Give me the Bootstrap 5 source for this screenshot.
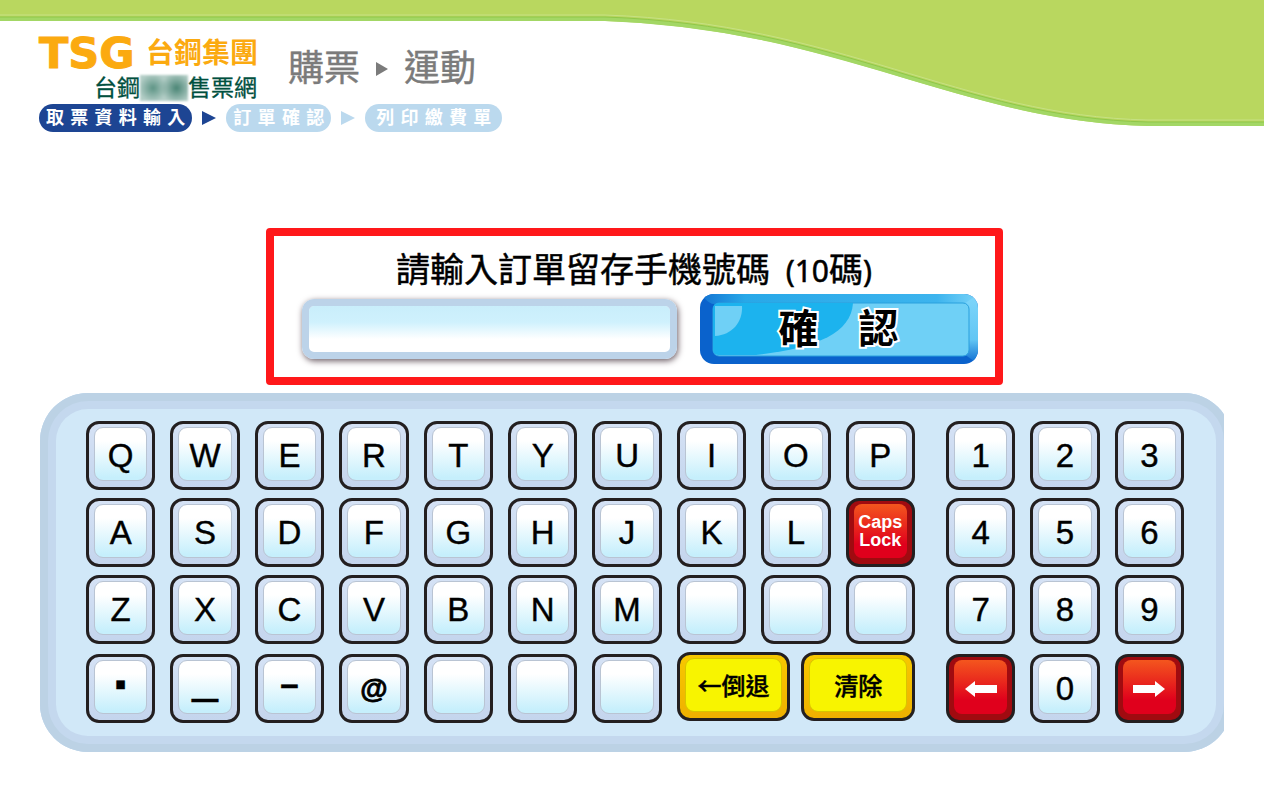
<!DOCTYPE html>
<html lang="zh-Hant">
<head>
<meta charset="utf-8">
<meta name="viewport" content="width=device-width, initial-scale=1">
<title>台鋼售票網</title>
<link rel="stylesheet" href="https://cdn.jsdelivr.net/npm/bootstrap@5.3.0/dist/css/bootstrap.min.css">
<style>
  body { font-family: "Liberation Sans", "Noto Sans CJK TC", sans-serif; background: #fff; color: #000; }
  .wave { height: 128px; z-index: -1; }
  .site-header { padding: 34px 39px 0; }
  .brand { color: #fbaa10; width: 219px; line-height: 40px; text-decoration: none; }
  .brand-mark { font: 700 43px/38px "DejaVu Sans", sans-serif; -webkit-text-stroke: 1px; }
  .brand-group { font-size: 28px; font-weight: 700; line-height: 40px; }
  .brand-site { color: #00503f; font-size: 23px; line-height: 28px; padding-right: 1px; -webkit-text-stroke: 0.3px; }
  .smudge { width: 48px; height: 26px; background: radial-gradient(circle at 27% 50%, #5d9485 0, transparent 38%), radial-gradient(circle at 76% 50%, #4a8575 0, transparent 40%), #b4cec7; filter: blur(1px); }
  .crumb { color: #7b7b7b; font-size: 36px; line-height: 54px; gap: 16px; padding-left: 30px; -webkit-text-stroke: 0.4px; }
  .steps { gap: 10px; color: #bbd9ee; padding-top: 2px; }
  .step-pill { background: #bbd9ee; color: #fff; font: 700 18px/28px "DejaVu Sans", "Noto Sans CJK TC", sans-serif; border-radius: 14px; padding: 0 7px; white-space: nowrap; height: 28px; }
  .step-pill.wide { padding: 0 11px; }
  .step-pill.current { background: #1d4593; }
  .entry { max-width: 737px; border: 8px solid #ff181a; border-radius: 4px; padding: 11px 17px 13px 28px; margin: 96px auto 8px; }
  .entry-label { font-size: 34px; line-height: 46px; padding-right: 11px; white-space: pre; -webkit-text-stroke: 0.5px; }
  .entry-label span { font-family: "Noto Sans", sans-serif; font-size: 30px; }
  .entry-row { gap: 23px; }
  .phone-box { height: 60px; border: 7px solid #bcd3e9; border-radius: 12px; background: linear-gradient(#c9eefb 0, #cff1fd 35%, #fff 72%) padding-box; box-shadow: 1px 2px 6px #6b5c64; font-size: 30px; }
  .phone-box:focus { border-color: #bcd3e9; background: linear-gradient(#c9eefb 0, #cff1fd 35%, #fff 72%) padding-box; }
  .confirm { width: 278px; height: 70px; border: 0; padding: 0; border-radius: 14px; overflow: hidden; background: #0a62cc; }
  .confirm-text { font-size: 40px; font-weight: 700; line-height: 70px; color: #000; -webkit-text-stroke: 4px #fff; paint-order: stroke fill; }
  .board-clip { margin: 0 40px; }
  .board { margin-right: -8px; border-radius: 48px; padding: 28px 48px 29px 46px; background: #d1e8f8; box-shadow: inset 0 0 0 8px #bcd2e5, inset 0 0 0 16px #c4d8ee; }
  .board-cols { display: grid; grid-template-columns: 829fr 238fr; gap: 31px; }
  .keys { display: grid; gap: 8px 15px; align-content: start; }
  .keys-abc { grid-template-columns: repeat(10, minmax(0, 1fr)); }
  .keys-num { grid-template-columns: repeat(3, minmax(0, 1fr)); }
  .keycap { height: 69px; width: 100%; border: 3px solid #231f20; border-radius: 13px; padding: 3px 5px 6px; background: linear-gradient(#d5e2f5, #c4d5ed); color: #000; }
  .face { display: flex; align-items: center; justify-content: center; height: 100%; border-radius: 9px; border: 1px solid #b9c4d3; background: linear-gradient(#fff 25%, #c6effc 95%); font-size: 33px; line-height: 36px; -webkit-text-stroke: 0.4px; padding-top: 3px; }
  .low { margin-top: 2px; }
  .big-line { font-size: 46px; padding-bottom: 24px; }
  .raised { padding-bottom: 10px; }
  .strong-at { font-size: 28px; font-weight: 700; -webkit-text-stroke: 0.8px; }
  .red { background: #a00b10; color: #fff; }
  .red .face { border: 0; background: linear-gradient(#f4561e, #e0001c 75%); border-radius: 8px; }
  .red .caps { font-size: 18px; font-weight: 700; line-height: 18px; padding-top: 0; -webkit-text-stroke: 0; }
  .yellow-pair { grid-column: span 3; display: flex; gap: 11px; }
  .yellow { background: linear-gradient(#f7c800, #efb000); }
  .yellow .face { background: #f8f400; border-color: #d9c400; font-family: "Noto Sans CJK TC", sans-serif; font-size: 24px; font-weight: 500; white-space: nowrap; padding-top: 0; }
</style>
</head>
<body>
<svg class="wave position-absolute top-0 start-0 w-100" viewBox="0 0 1264 128" preserveAspectRatio="none" aria-hidden="true">
  <path fill="#b9d75f" d="M0 0H1264V126H1148C960 122 840 29 605 21H0Z"/>
  <path fill="none" stroke="#c6e184" stroke-width="1" d="M0 15H605C840 23 960 116 1148 120H1264"/>
  <path fill="none" stroke="#a3d765" stroke-width="4" d="M0 19H605C840 27 960 120 1148 124H1264"/>
  <path fill="none" stroke="#8fc74a" stroke-width="1" d="M0 17H605C840 25 960 118 1148 122H1264"/>
</svg>

<header class="site-header">
  <div class="d-flex align-items-start">
    <a class="brand d-block" href="#">
      <span class="d-flex justify-content-between"><span class="brand-mark">TSG</span><span class="brand-group">台鋼集團</span></span>
      <span class="brand-site d-flex justify-content-end align-items-center"><span>台鋼</span><span class="smudge"></span><span>售票網</span></span>
    </a>
    <div class="crumb d-flex align-items-center pt-2">
      <span>購票</span>
      <svg width="12" height="14" viewBox="0 0 12 14" aria-hidden="true"><path fill="#7b7b7b" d="M0 0 12 7 0 14Z"/></svg>
      <span>運動</span>
    </div>
  </div>
  <div class="steps d-flex align-items-center">
    <span class="step-pill current">取 票 資 料 輸 入</span>
    <svg width="14" height="14" viewBox="0 0 14 14" aria-hidden="true"><path fill="#1d4593" d="M0 0 14 7 0 14Z"/></svg>
    <span class="step-pill">訂 單 確 認</span>
    <svg width="14" height="14" viewBox="0 0 14 14" aria-hidden="true"><path fill="#bbd9ee" d="M0 0 14 7 0 14Z"/></svg>
    <span class="step-pill wide">列 印 繳 費 單</span>
  </div>
</header>

<main>
  <div class="ps-1">
  <form class="entry" onsubmit="return false">
    <label class="entry-label d-block text-center" for="phone">請輸入訂單留存手機號碼<span>  (10</span>碼<span>)</span></label>
    <div class="entry-row d-flex align-items-center">
      <input class="form-control phone-box flex-fill" id="phone" type="text" maxlength="10">
      <button class="confirm position-relative flex-shrink-0" type="submit">
        <svg class="position-absolute top-0 start-0 w-100 h-100" viewBox="0 0 278 70" preserveAspectRatio="none" aria-hidden="true">
          <defs>
            <linearGradient id="rim" x1="0" x2="1" y1="0" y2="0"><stop offset="0" stop-color="#1577d4"/><stop offset=".15" stop-color="#28a8e8"/><stop offset=".85" stop-color="#3db4ee"/><stop offset="1" stop-color="#79d3f8"/></linearGradient>
            <linearGradient id="side" x1="0" x2="0" y1="0" y2="1"><stop offset="0" stop-color="#7fd6fa"/><stop offset=".65" stop-color="#62c6f4"/><stop offset="1" stop-color="#0a68d0"/></linearGradient>
          </defs>
          <path fill="url(#rim)" d="M4 4V0H278L266 10H14Q10 10 4 4Z"/>
          <path fill="url(#side)" d="M278 0V70L264 60V10Z"/>
          <rect x="13" y="9" width="256" height="53" rx="6" fill="#6fd0f6" stroke="#2ba0dd"/>
          <path fill="#1cb3ee" d="M19 9H153C151 40 115 54 56 61H19Q13 61 13 55V15Q13 9 19 9Z"/>
          <path fill="#6fd0f6" d="M15 12H42C43 28 32 41 15 42Z"/>
        </svg>
        <span class="confirm-text position-relative">確　認</span>
      </button>
    </div>
  </form>
  </div>

  <div class="board-clip overflow-hidden">
    <div class="board">
      <div class="board-cols">
        <div class="keys keys-abc">
          <button class="keycap" type="button"><span class="face">Q</span></button>
          <button class="keycap" type="button"><span class="face">W</span></button>
          <button class="keycap" type="button"><span class="face">E</span></button>
          <button class="keycap" type="button"><span class="face">R</span></button>
          <button class="keycap" type="button"><span class="face">T</span></button>
          <button class="keycap" type="button"><span class="face">Y</span></button>
          <button class="keycap" type="button"><span class="face">U</span></button>
          <button class="keycap" type="button"><span class="face">I</span></button>
          <button class="keycap" type="button"><span class="face">O</span></button>
          <button class="keycap" type="button"><span class="face">P</span></button>
          <button class="keycap" type="button"><span class="face">A</span></button>
          <button class="keycap" type="button"><span class="face">S</span></button>
          <button class="keycap" type="button"><span class="face">D</span></button>
          <button class="keycap" type="button"><span class="face">F</span></button>
          <button class="keycap" type="button"><span class="face">G</span></button>
          <button class="keycap" type="button"><span class="face">H</span></button>
          <button class="keycap" type="button"><span class="face">J</span></button>
          <button class="keycap" type="button"><span class="face">K</span></button>
          <button class="keycap" type="button"><span class="face">L</span></button>
          <button class="keycap red" type="button"><span class="face caps flex-column"><span>Caps</span><span>Lock</span></span></button>
          <button class="keycap" type="button"><span class="face">Z</span></button>
          <button class="keycap" type="button"><span class="face">X</span></button>
          <button class="keycap" type="button"><span class="face">C</span></button>
          <button class="keycap" type="button"><span class="face">V</span></button>
          <button class="keycap" type="button"><span class="face">B</span></button>
          <button class="keycap" type="button"><span class="face">N</span></button>
          <button class="keycap" type="button"><span class="face">M</span></button>
          <button class="keycap" type="button"><span class="face"></span></button>
          <button class="keycap" type="button"><span class="face"></span></button>
          <button class="keycap" type="button"><span class="face"></span></button>
          <button class="keycap low" type="button"><span class="face raised">▪</span></button>
          <button class="keycap low" type="button"><span class="face big-line">_</span></button>
          <button class="keycap low" type="button"><span class="face raised fw-bold">–</span></button>
          <button class="keycap low" type="button"><span class="face strong-at">@</span></button>
          <button class="keycap low" type="button"><span class="face"></span></button>
          <button class="keycap low" type="button"><span class="face"></span></button>
          <button class="keycap low" type="button"><span class="face"></span></button>
          <div class="yellow-pair">
            <button class="keycap yellow" type="button"><span class="face">←倒退</span></button>
            <button class="keycap yellow" type="button"><span class="face">清除</span></button>
          </div>
        </div>
        <div class="keys keys-num">
          <button class="keycap" type="button"><span class="face">1</span></button>
          <button class="keycap" type="button"><span class="face">2</span></button>
          <button class="keycap" type="button"><span class="face">3</span></button>
          <button class="keycap" type="button"><span class="face">4</span></button>
          <button class="keycap" type="button"><span class="face">5</span></button>
          <button class="keycap" type="button"><span class="face">6</span></button>
          <button class="keycap" type="button"><span class="face">7</span></button>
          <button class="keycap" type="button"><span class="face">8</span></button>
          <button class="keycap" type="button"><span class="face">9</span></button>
          <button class="keycap red low" type="button" aria-label="←"><span class="face"><svg width="32" height="16" viewBox="0 0 32 16"><path fill="#fff" d="M0 8 10 0V4H32V12H10V16Z"/></svg></span></button>
          <button class="keycap low" type="button"><span class="face">0</span></button>
          <button class="keycap red low" type="button" aria-label="→"><span class="face"><svg width="32" height="16" viewBox="0 0 32 16"><path fill="#fff" d="M32 8 22 0V4H0V12H22V16Z"/></svg></span></button>
        </div>
      </div>
    </div>
  </div>
</main>
<script src="https://cdn.jsdelivr.net/npm/bootstrap@5.3.0/dist/js/bootstrap.bundle.min.js"></script>
</body>
</html>
